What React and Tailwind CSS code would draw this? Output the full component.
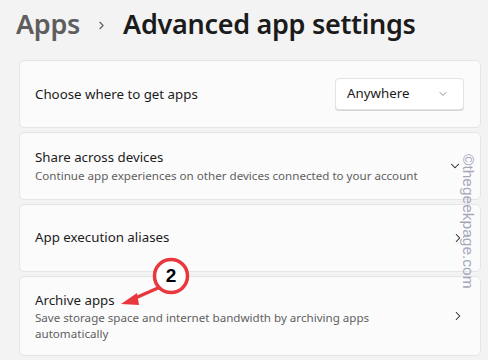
import { ChevronDown, ChevronRight } from "lucide-react";

function Card({ className = "", children }) {
    return (
        <div className={`flex items-center justify-between rounded-[5px] border border-[#e5e5e5] bg-[#fbfbfb] pl-[15px] ${className}`}>
            {children}
        </div>
    );
}

export default function App() {
    return (
        <div
            className="relative h-[360px] w-[488px] overflow-hidden bg-[#f3f3f3] text-[#1b1b1b]"
            style={{ fontFamily: '"Segoe UI", "Noto Sans", sans-serif' }}
        >
            <div className="flex h-[60px] items-center pl-[16px] pb-[11px] text-[27px] font-semibold tracking-[-0.3px]">
                <span className="text-[#5e5e5e]">Apps</span>
                <ChevronRight size={13} strokeWidth={2} className="mx-[15px] mt-[2px] text-[#5e5e5e]" />
                <span>Advanced app settings</span>
            </div>

            <div className="flex flex-col gap-[4px] pl-[19px] pr-[7px]">
                <Card className="h-[68px] pr-[16px]">
                    <span className="mt-[1px] text-[13.3px]">Choose where to get apps</span>
                    <div className="flex h-[32px] w-[129px] items-center justify-between rounded-[4px] border border-[#e3e3e3] bg-white pl-[11px] pr-[14px] text-[13.3px] shadow-[0_1px_0_#d6d6d6]">
                        <span>Anywhere</span>
                        <ChevronDown size={12} strokeWidth={1.5} className="text-[#6b6b6b]" />
                    </div>
                </Card>

                <Card className="h-[68px] pr-[18px]">
                    <div className="flex flex-col">
                        <span className="text-[13.3px] leading-[19px]">Share across devices</span>
                        <span className="whitespace-nowrap text-[11.6px] leading-[17px] text-[#5f5f5f]">
                            Continue app experiences on other devices connected to your account
                        </span>
                    </div>
                    <ChevronDown size={14} strokeWidth={1.8} className="text-[#222]" />
                </Card>

                <Card className="h-[68px] pr-[15px]">
                    <span className="text-[13.3px]">App execution aliases</span>
                    <ChevronRight size={14} strokeWidth={1.8} className="text-[#222]" />
                </Card>

                <Card className="h-[80px] pr-[15px]">
                    <div className="flex flex-col">
                        <span className="text-[13.3px] leading-[19px]">Archive apps</span>
                        <span className="w-[345px] text-[11.6px] leading-[16px] text-[#5f5f5f]">
                            Save storage space and internet bandwidth by archiving apps automatically
                        </span>
                    </div>
                    <ChevronRight size={14} strokeWidth={1.8} className="text-[#222]" />
                </Card>
            </div>

            <div
                className="absolute left-[476px] top-[154px] origin-top-left rotate-90 whitespace-nowrap text-[15.5px] leading-none text-[#a6a6bb]"
                style={{ fontFamily: '"Liberation Sans", Arial, sans-serif' }}
            >
                ©thegeekpage.com
            </div>

            <svg className="absolute left-0 top-0" width="488" height="360" viewBox="0 0 488 360">
                <line x1="158" y1="288" x2="133" y2="299" stroke="#e8383d" strokeWidth="3.5" strokeLinecap="round" />
                <polygon points="121,304 137,293 139,305" fill="#e8383d" />
                <circle cx="171" cy="276" r="16.5" fill="#ffffff" stroke="#e8383d" strokeWidth="3.5" />
            </svg>
            <div
                className="absolute left-[155px] top-[260px] flex h-[32px] w-[32px] items-center justify-center text-[19px] font-bold text-black"
                style={{ fontFamily: '"Liberation Sans", Arial, sans-serif' }}
            >
                2
            </div>
        </div>
    );
}
